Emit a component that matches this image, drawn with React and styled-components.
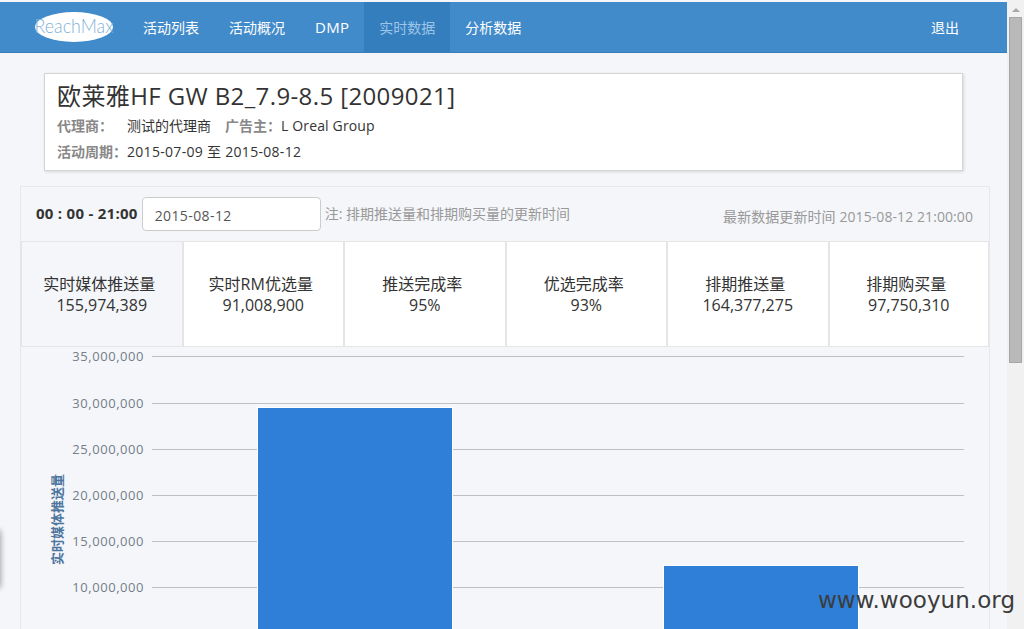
import * as React from "react";
import styled, { createGlobalStyle } from "styled-components";

const FONT = `"Open Sans", "Noto Sans CJK SC", sans-serif`;

const GlobalStyle = createGlobalStyle`
  html, body {
    margin: 0;
    height: 100%;
    overflow: hidden;
  }
  body {
    font-family: ${FONT};
    background: #f4f6fa;
    color: #333;
  }
`;

const Shell = styled.div`
  display: flex;
  width: 1024px;
  height: 629px;
  overflow: hidden;
  position: relative;
`;

const Main = styled.div`
  width: 1007px;
  flex: none;
  padding-top: 2px;
  box-sizing: border-box;
  background: #f4f6fa;
`;

const Navbar = styled.nav`
  display: flex;
  align-items: stretch;
  height: 51px;
  padding-left: 34px;
  background: #428bca;
  border-bottom: 1px solid #357ebd;
  box-sizing: border-box;
`;

const Logo = styled.div`
  width: 94px;
  flex: none;
  display: flex;
  align-items: center;

  svg {
    display: block;
  }
`;

const NavItem = styled.a`
  display: flex;
  align-items: center;
  padding: 0 15px;
  font-size: ${({ $latin }) => ($latin ? 15 : 14)}px;
  letter-spacing: ${({ $latin }) => ($latin ? "0.25px" : "0")};
  color: ${({ $active }) => ($active ? "#9cc5e8" : "#fff")};
  background: ${({ $active }) => ($active ? "#357ebd" : "transparent")};
`;

const NavRight = styled.div`
  display: flex;
  margin-left: auto;
  margin-right: 33px;
`;

const InfoCard = styled.section`
  margin: 20px 44px 15px;
  height: 98px;
  box-sizing: border-box;
  padding: 4px 12px 0;
  background: #fff;
  border: 1px solid #d4d4d4;
  box-shadow: 1px 1px 3px rgba(0, 0, 0, 0.12);
`;

const Title = styled.h1`
  margin: 0;
  font-size: 24px;
  font-weight: 400;
  line-height: 36px;
  letter-spacing: 0.39px;
  color: #333;
`;

const MetaRow = styled.div`
  display: flex;
  font-size: 14px;
  line-height: 20px;
  margin-top: ${({ $gap }) => $gap || 0}px;
`;

const MetaLabel = styled.span`
  color: #888;
  font-weight: 700;
  margin-left: ${({ $offset }) => $offset || 0}px;
  margin-right: ${({ $after }) => $after || 0}px;
`;

const MetaValue = styled.span`
  letter-spacing: ${({ $spacing }) => $spacing || 0}px;
`;

const Panel = styled.section`
  margin: 0 17px 0 20px;
  border: 1px solid #e6e8ec;
  border-bottom: 0;
  height: 460px;
`;

const Toolbar = styled.div`
  display: flex;
  align-items: center;
  height: 54px;
  padding: 0 16px 0 15px;
  box-sizing: border-box;
`;

const Clock = styled.span`
  font-size: 15px;
  font-weight: 700;
  letter-spacing: 0.27px;
  color: #333;
  margin-right: 4px;
  margin-top: -2px;
`;

const DateInput = styled.input`
  width: 179px;
  height: 34px;
  box-sizing: border-box;
  padding: 2px 12px 0;
  font: 14px ${FONT};
  letter-spacing: 0.4px;
  color: #555;
  background: #fff;
  border: 1px solid #ccc;
  border-radius: 4px;
  outline: none;
`;

const Note = styled.span`
  font-size: 14px;
  color: #999;
  margin-left: 4px;
  margin-top: -3px;
`;

const Updated = styled.span`
  font-size: 14px;
  letter-spacing: 0.08px;
  color: #999;
  margin-left: auto;
  margin-top: 3px;
`;

const Stats = styled.div`
  display: grid;
  grid-template-columns: repeat(6, 1fr);
  height: 106px;
  margin-left: -1px;
  border-top: 1px solid #e5e5e5;
  border-bottom: 1px solid #e5e5e5;
  box-sizing: border-box;
`;

const Stat = styled.div`
  display: flex;
  flex-direction: column;
  align-items: center;
  justify-content: center;
  font-size: 16px;
  line-height: 21px;
  color: #333;
  background: ${({ $active }) => ($active ? "transparent" : "#fff")};
  border-left: 2px solid #e5e5e5;
  padding-top: 2px;
  box-sizing: border-box;

  &:last-child {
    border-right: 1px solid #e5e5e5;
  }
`;

const StatLabel = styled.span`
  padding-right: 5px;
`;

const Chart = styled.svg`
  display: block;
`;

const Scrollbar = styled.div`
  width: 17px;
  flex: none;
  display: flex;
  flex-direction: column;
  align-items: center;
  background: #f1f1f1;
`;

const ScrollArrow = styled.div`
  width: 0;
  height: 0;
  margin: 8px 0 5px;
  border-left: 4px solid transparent;
  border-right: 4px solid transparent;
  border-bottom: 4px solid #a8a8a8;
`;

const ScrollThumb = styled.div`
  width: 13px;
  height: 346px;
  box-sizing: border-box;
  background: #b9b9b9;
  border: 1px solid #a6a6a6;
`;

const SideTab = styled.div`
  position: absolute;
  left: -6px;
  top: 530px;
  width: 6px;
  height: 58px;
  border-radius: 3px;
  box-shadow: 0 0 6px rgba(0, 0, 0, 0.45);
`;

const Watermark = styled.div`
  position: absolute;
  left: 818px;
  top: 586px;
  font-family: "DejaVu Sans", sans-serif;
  font-size: 23px;
  line-height: 28px;
  letter-spacing: 0.05px;
  color: #3c3c3c;
`;

const navLinks = [
  { label: "活动列表" },
  { label: "活动概况" },
  { label: "DMP", latin: true },
  { label: "实时数据", active: true },
  { label: "分析数据" },
];

const stats = [
  { label: "实时媒体推送量", value: "155,974,389", active: true },
  { label: "实时RM优选量", value: "91,008,900" },
  { label: "推送完成率", value: "95%" },
  { label: "优选完成率", value: "93%" },
  { label: "排期推送量", value: "164,377,275" },
  { label: "排期购买量", value: "97,750,310" },
];

const ticks = [
  { label: "35,000,000", y: 9.5 },
  { label: "30,000,000", y: 56.5 },
  { label: "25,000,000", y: 102.5 },
  { label: "20,000,000", y: 148.5 },
  { label: "15,000,000", y: 194.5 },
  { label: "10,000,000", y: 240.5 },
  { label: "5,000,000", y: 286.5 },
];

const bars = [
  { x: 236.5, y: 60.5, h: 260 },
  { x: 642.5, y: 218.5, h: 100 },
];

const ChartArea = () => (
  <Chart width="968" height="300" viewBox="0 0 968 300">
    {ticks.map((t) => (
      <g key={t.label}>
        <line x1="131" x2="943" y1={t.y} y2={t.y} stroke="#c0c0c4" />
        <text x="123" y={t.y + 4.5} textAnchor="end" fontSize="13" letterSpacing="0.55" fill="#757e88">
          {t.label}
        </text>
      </g>
    ))}
    {bars.map((b) => (
      <rect key={b.x} x={b.x} y={b.y} width="195" height={b.h} fill="#2f7ed8" stroke="#fff" />
    ))}
    <text
      transform="translate(41 218) rotate(-90)"
      fontSize="13"
      fontWeight="700"
      fill="#4d759e"
    >
      实时媒体推送量
    </text>
  </Chart>
);

export default function App() {
  return (
    <Shell>
      <GlobalStyle />
      <Main>
        <Navbar>
          <Logo>
            <svg width="84" height="32" viewBox="0 0 84 32">
              <ellipse cx="40" cy="16" rx="39" ry="15" fill="#fff" />
              <text
                x="0.5"
                y="22"
                fontFamily="Lato, sans-serif"
                fontWeight="300"
                fontSize="19"
                textLength="79"
                lengthAdjust="spacingAndGlyphs"
                fill="#7fb2d6"
              >
                ReachMax
              </text>
            </svg>
          </Logo>
          {navLinks.map((l) => (
            <NavItem key={l.label} $active={l.active} $latin={l.latin}>
              {l.label}
            </NavItem>
          ))}
          <NavRight>
            <NavItem>退出</NavItem>
          </NavRight>
        </Navbar>
        <InfoCard>
          <Title>欧莱雅HF GW B2_7.9-8.5 [2009021]</Title>
          <MetaRow $gap={2}>
            <MetaLabel $after={14}>代理商：</MetaLabel>
            <MetaValue>测试的代理商</MetaValue>
            <MetaLabel $offset={14}>广告主：</MetaLabel>
            <MetaValue $spacing={0.15}>L Oreal Group</MetaValue>
          </MetaRow>
          <MetaRow $gap={6}>
            <MetaLabel>活动周期：</MetaLabel>
            <MetaValue $spacing={0.3}>2015-07-09 至 2015-08-12</MetaValue>
          </MetaRow>
        </InfoCard>
        <Panel>
          <Toolbar>
            <Clock>00 : 00 - 21:00</Clock>
            <DateInput readOnly value="2015-08-12" />
            <Note>注: 排期推送量和排期购买量的更新时间</Note>
            <Updated>最新数据更新时间 2015-08-12 21:00:00</Updated>
          </Toolbar>
          <Stats>
            {stats.map((s) => (
              <Stat key={s.label} $active={s.active}>
                <StatLabel>{s.label}</StatLabel>
                <span>{s.value}</span>
              </Stat>
            ))}
          </Stats>
          <ChartArea />
        </Panel>
      </Main>
      <Scrollbar>
        <ScrollArrow />
        <ScrollThumb />
      </Scrollbar>
      <SideTab />
      <Watermark>www.wooyun.org</Watermark>
    </Shell>
  );
}
